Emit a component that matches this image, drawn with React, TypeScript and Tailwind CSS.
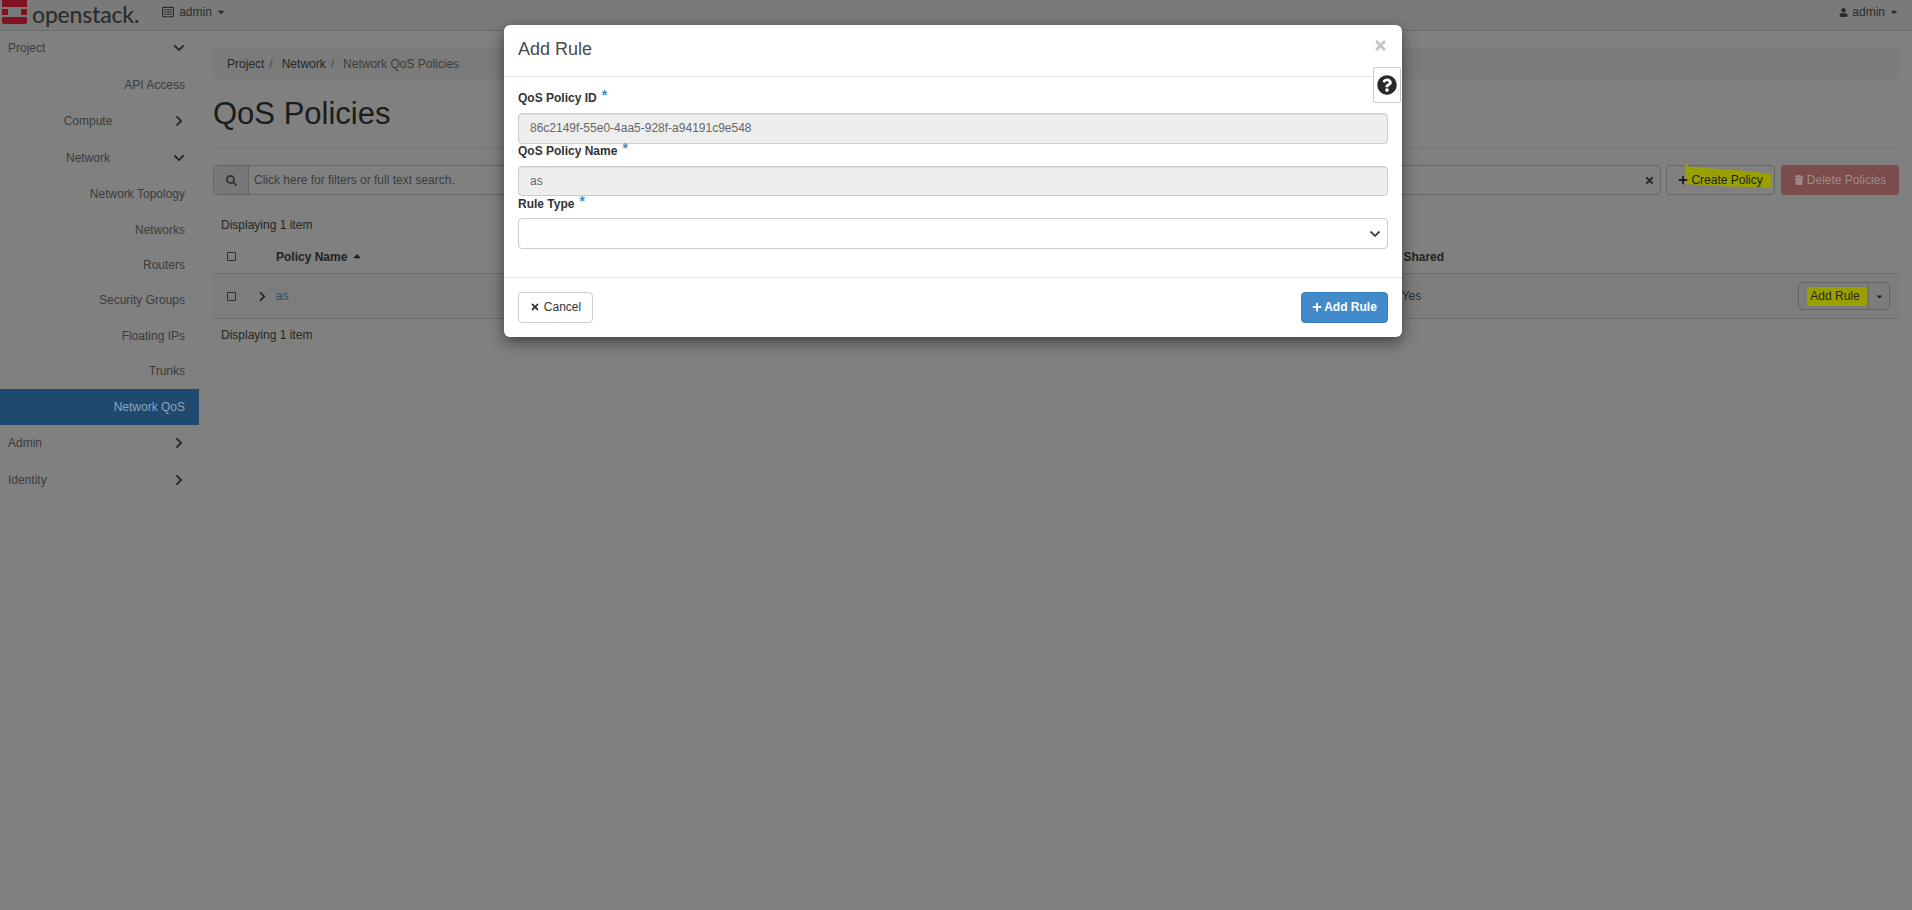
import {
  FaCaretDown,
  FaChevronDown,
  FaChevronRight,
  FaPlus,
  FaQuestionCircle,
  FaRegListAlt,
  FaSearch,
  FaSortUp,
  FaTimes,
  FaTrash,
  FaUser,
} from "react-icons/fa";

const sideRows = [
  { label: "Project", h: "h-[37px]", kind: "top", open: true },
  { label: "API Access", h: "h-[37px]", kind: "leaf" },
  { label: "Compute", h: "h-[36px]", kind: "group", open: false },
  { label: "Network", h: "h-[37px]", kind: "group", open: true },
  { label: "Network Topology", h: "h-[36px]", kind: "leaf" },
  { label: "Networks", h: "h-[35px]", kind: "leaf" },
  { label: "Routers", h: "h-[35px]", kind: "leaf" },
  { label: "Security Groups", h: "h-[36px]", kind: "leaf" },
  { label: "Floating IPs", h: "h-[35px]", kind: "leaf" },
  { label: "Trunks", h: "h-[36px]", kind: "leaf" },
  { label: "Network QoS", h: "h-[36px]", kind: "active" },
  { label: "Admin", h: "h-[36px]", kind: "top", open: false },
  { label: "Identity", h: "h-[37px]", kind: "top", open: false },
];

function SideRow({ row }: { row: (typeof sideRows)[number] }) {
  const Chevron = row.open ? FaChevronDown : FaChevronRight;

  if (row.kind === "leaf" || row.kind === "active") {
    return (
      <div
        className={`${row.h} flex items-center justify-end pr-[14px] ${
          row.kind === "active" ? "bg-[#1f4a70] text-[#8fa5b8]" : "text-[#3c3c3c]"
        }`}
      >
        {row.label}
      </div>
    );
  }

  return (
    <div className={`${row.h} flex items-center text-[#3c3c3c]`}>
      <span className={row.kind === "top" ? "w-[172px] pl-2" : "w-[176px] text-center"}>
        {row.label}
      </span>
      <Chevron
        className={`text-[12px] text-[#2a2a2a] ${row.kind === "top" ? "ml-[1px]" : "-ml-[3px]"}`}
      />
    </div>
  );
}

function Logo() {
  return (
    <svg width="25" height="24" viewBox="0 0 25 24" className="shrink-0">
      <path
        d="M0 0H25V7H0ZM0 9H6V15H0ZM19 9H25V15H19ZM0 17H25V22Q25 24 23 24H2Q0 24 0 22Z"
        fill="#7f1420"
      />
    </svg>
  );
}

function Label({ text }: { text: string }) {
  return (
    <label className="flex h-[22px] items-center pb-2 font-bold text-[#333333]">
      {text}
      <span className="relative -top-[3px] ml-[5px] text-[14px] leading-none text-[#428bca]">*</span>
    </label>
  );
}

function ReadOnlyInput({ value, tall }: { value: string; tall?: boolean }) {
  return (
    <div
      className={`flex ${
        tall ? "h-[31px]" : "h-[30px]"
      } items-center rounded-[4px] border border-[#cccccc] bg-[#eeeeee] pb-[1px] pl-[11px] text-[#666666] shadow-[inset_0_1px_1px_rgba(0,0,0,0.075)]`}
    >
      {value}
    </div>
  );
}

function AddRuleModal() {
  return (
    <div className="absolute left-[504px] top-[25px] z-10 h-[312px] w-[898px] rounded-[6px] bg-white shadow-[0_5px_15px_rgba(0,0,0,0.5)]">
      <div className="flex h-[52px] items-start justify-between border-b border-[#e5e5e5] px-[14px] pt-[12px]">
        <h4 className="text-[18px] leading-[24px] text-[#4a4a4a]">Add Rule</h4>
        <FaTimes className="mt-[1px] text-[15px] text-[#c6c6c6]" />
      </div>

      <div className="absolute right-[1px] top-[42px] flex h-[36px] w-[28px] items-center justify-center rounded-[2px] border border-[#cccccc] bg-white">
        <FaQuestionCircle className="text-[20px] text-[#2a2a2a]" />
      </div>

      <div className="h-[200px] px-[14px] pt-[14px]">
        <Label text="QoS Policy ID" />
        <ReadOnlyInput value="86c2149f-55e0-4aa5-928f-a94191c9e548" tall />
        <Label text="QoS Policy Name" />
        <ReadOnlyInput value="as" />
        <div className="pt-[1px]">
          <Label text="Rule Type" />
        </div>
        <div className="-mt-[1px] flex h-[31px] items-center justify-end rounded-[4px] border border-[#cccccc] bg-white pr-[6px]">
          <svg width="12" height="8" viewBox="0 0 12 8" fill="none" stroke="#444444" strokeWidth="1.8">
            <path d="M1.5 1.5 6 6l4.5-4.5" />
          </svg>
        </div>
      </div>

      <div className="flex h-[60px] items-start justify-between border-t border-[#e5e5e5] px-[14px] pt-[14px]">
        <button className="flex h-[31px] w-[75px] items-center justify-center gap-[4px] rounded-[4px] border border-[#cccccc] bg-white pb-[1px] text-[#333333]">
          <FaTimes className="text-[10px]" />
          Cancel
        </button>
        <button className="flex h-[31px] w-[87px] items-center justify-center gap-[2px] rounded-[4px] border border-[#357ebd] bg-[#428bca] pb-[1px] font-bold text-white">
          <FaPlus className="text-[10px]" />
          Add Rule
        </button>
      </div>
    </div>
  );
}

export default function App() {
  return (
    <div className="relative h-[910px] w-[1912px] overflow-hidden bg-[#808080] font-['Liberation_Sans',Arial,sans-serif] text-[12px] text-[#222222]">
      <div className="flex h-[31px] items-center justify-between border-b border-[#6c6c6c] bg-[#7a7a7a] pr-[13px]">
        <div className="flex items-center">
          <div className="-mt-[6px] ml-[2px]">
            <Logo />
          </div>
          <span className="-mt-[1px] ml-[5px] font-['Lato',sans-serif] text-[23px] font-medium leading-none tracking-[-0.2px] text-[#2c2c2c]">
            openstack.
          </span>
          <FaRegListAlt className="-mt-[6px] ml-[23px] text-[12px] text-[#2c2c2c]" />
          <span className="-mt-[6px] ml-[5px] text-[#2c2c2c]">admin</span>
          <FaCaretDown className="-mt-[6px] ml-[4px] text-[10px] text-[#2c2c2c]" />
        </div>
        <div className="-mt-[6px] flex items-center text-[#2c2c2c]">
          <FaUser className="mr-[4px] text-[9px]" />
          admin
          <FaCaretDown className="ml-[4px] text-[10px]" />
        </div>
      </div>

      <div className="flex">
        <aside className="-mt-[2px] w-[199px] shrink-0">
          {sideRows.map((row) => (
            <SideRow key={row.label} row={row} />
          ))}
        </aside>

        <main className="ml-[14px] w-[1686px] pt-[17px]">
          <div className="flex h-[31px] items-center gap-[5px] rounded-[4px] bg-[#7b7b7b] px-[14px] text-[#262626]">
            <span>Project</span>
            <span className="text-[#4a4a4a]">/</span>
            <span className="ml-[4px]">Network</span>
            <span className="text-[#4a4a4a]">/</span>
            <span className="ml-[4px] text-[#3c3c3c]">Network QoS Policies</span>
          </div>

          <div className="mt-[15px] h-[54px] border-b border-[#767676]">
            <h1 className="text-[31px] leading-[40px] text-[#1c1c1c]">QoS Policies</h1>
          </div>

          <div className="mt-[17px] flex h-[30px]">
            <div className="flex w-[1449px] rounded-[4px] border border-[#666666]">
              <div className="flex w-[35px] items-center justify-center border-r border-[#666666] bg-[#777777]">
                <FaSearch className="text-[11px] text-[#333333]" />
              </div>
              <div className="flex flex-1 items-center justify-between pl-[5px] pr-[5px] text-[#3c3c3c]">
                Click here for filters or full text search.
                <FaTimes className="text-[11px] text-[#2a2a2a]" />
              </div>
            </div>
            <button className="relative ml-[5px] flex h-[30px] w-[109px] items-center justify-center gap-[3px] rounded-[4px] border border-[#666666] text-[#1e1e1e]">
              <svg
                width="88"
                height="26"
                viewBox="0 0 88 26"
                className="absolute left-[18px] top-[-3px]"
              >
                <path d="M0 0L5 4C30 6 60 7 86 11L87 25C60 24 30 23 0 21Z" fill="#9aa000" />
              </svg>
              <FaPlus className="relative text-[10px]" />
              <span className="relative">Create Policy</span>
            </button>
            <button className="ml-[6px] flex h-[30px] w-[118px] items-center justify-center gap-[3px] rounded-[4px] bg-[#7a4c4b] text-[#a08988]">
              <FaTrash className="text-[10px]" />
              Delete Policies
            </button>
          </div>

          <div className="mt-[21px] pl-2 text-[#262626]">Displaying 1 item</div>

          <div className="mt-[8px] flex h-[32px] items-center border-b border-[#6f6f6f] pb-[2px] font-bold text-[#222222]">
            <span className="ml-[14px] size-[9px] rounded-[1px] border border-[#2e2e2e]" />
            <span className="ml-[40px] flex items-center gap-[4px]">
              Policy Name
              <FaSortUp className="mt-[4px] text-[12px]" />
            </span>
            <span className="ml-[1040px]">Shared</span>
          </div>

          <div className="flex h-[45px] items-center border-b border-[#6f6f6f] bg-[#7d7d7d]">
            <span className="ml-[14px] size-[9px] rounded-[1px] border border-[#2e2e2e]" />
            <FaChevronRight className="ml-[21px] text-[11px] text-[#222222]" />
            <span className="ml-[8px] text-[#2d4f75]">as</span>
            <span className="ml-[1113px] text-[#2b2b2b]">Yes</span>
            <div className="ml-auto mr-[9px] flex h-[28px] rounded-[4px] border border-[#666666]">
              <span className="relative flex w-[69px] items-center justify-center text-[#262626]">
                <span className="absolute bottom-[3px] left-[8px] top-[4px] w-[60px] rounded-[2px] bg-[#9aa000]" />
                <span className="relative pl-[3px]">Add Rule</span>
              </span>
              <span className="flex w-[21px] items-center justify-center border-l border-[#666666]">
                <FaCaretDown className="text-[9px] text-[#222222]" />
              </span>
            </div>
          </div>

          <div className="mt-[7px] pl-2 text-[#262626]">Displaying 1 item</div>
        </main>
      </div>

      <AddRuleModal />
    </div>
  );
}
